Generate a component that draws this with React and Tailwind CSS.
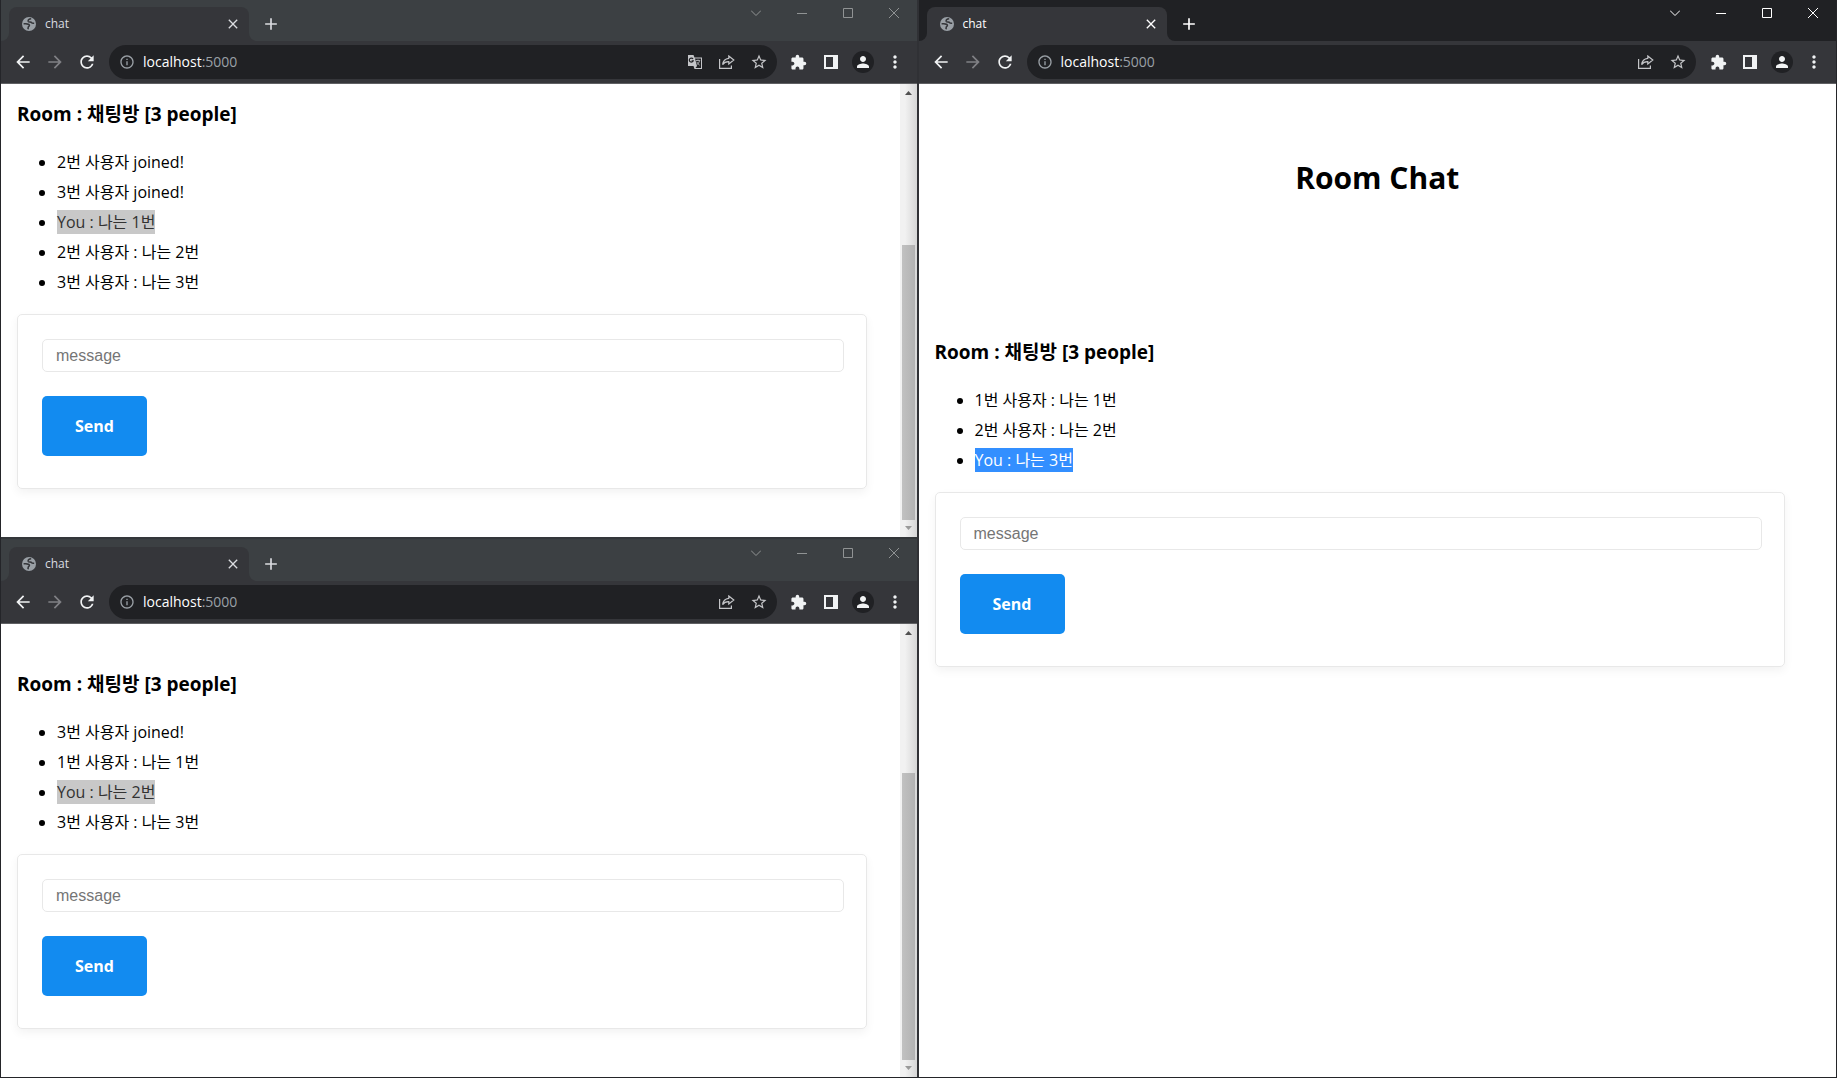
import React from 'react';
import { MdArrowBack, MdArrowForward, MdRefresh, MdInfoOutline, MdExtension, MdStarBorder, MdPerson, MdMoreVert, MdClose, MdAdd } from 'react-icons/md';

function Globe() {
  return (
    <svg viewBox="0 0 14 14" className="size-3.5 shrink-0" aria-hidden="true">
      <circle cx="7" cy="7" r="7" fill="#9aa0a6" />
      <path
        d="M9.200 1.800C6.800 2 5.900 3 6.200 4.200 6.600 5.500 9 4.600 9.600 5.700 10 6.500 11.200 6.300 12.200 6.300M1.600 6.800C3.800 6.700 5.400 6.400 6.400 7.300 7.400 7.600 7.800 8.600 6.800 9.400 5.800 9.900 6.300 11 6 12.200"
        fill="none"
        stroke="#35363a"
        strokeWidth="1.600"
      />
    </svg>
  );
}

function TranslateIcon() {
  return (
    <svg viewBox="0 0 14 14" className="size-3.5" aria-hidden="true">
      <path d="M0 0h5.500l1 2.500H14V14H6.500l-1-3H0z" fill="#c4c5c8" />
      <path d="M7 3.500h6V13H7.500l1.500-2z" fill="#202124" />
      <path d="M7.800 5.500h4.400M10 4.500v1M11.500 5.800c-.4 1.700-1.300 3-2.700 3.900M8.700 6.800c.6 1.300 1.700 2.600 3 3.400" fill="none" stroke="#a4a5a8" />
      <path d="M5 4A2 2 0 1 0 5.200 5.800H3.600" fill="none" stroke="#202124" strokeWidth="1.200" />
    </svg>
  );
}

function ShareIcon() {
  return (
    <svg viewBox="0 0 16 14" className="h-3.5 w-4" fill="none" stroke="#c4c5c8" strokeWidth="1.200" aria-hidden="true">
      <path d="M.6 4v9.400h11.800V10.500" />
      <path d="M9.800 1l5 4-5 4V6.600C7 6.500 5 7.500 3.600 9.600 4 6.300 6 3.700 9.800 3.300z" />
    </svg>
  );
}

function WindowControls({ active }) {
  const color = active ? 'text-white' : 'text-[#909394]';
  const button = 'flex h-[26px] w-[46px] items-center justify-center';
  const svg = { viewBox: '0 0 10 10', className: 'size-2.5', fill: 'none', stroke: 'currentColor', 'aria-hidden': true };
  return (
    <div className={`ml-auto flex ${color}`}>
      <button className={button} aria-label="Search tabs"><svg {...svg}><path d="M0 2.500l5 5 5-5" /></svg></button>
      <button className={button} aria-label="Minimize"><svg {...svg}><path d="M0 5.500h10" /></svg></button>
      <button className={button} aria-label="Maximize"><svg {...svg}><path d="M.5.500h9v9h-9z" /></svg></button>
      <button className={button} aria-label="Close"><svg {...svg}><path d="M0 0l10 10M10 0L0 10" /></svg></button>
    </div>
  );
}

function TabBar({ active, framed }) {
  const bar = active ? 'bg-[#202124]' : 'bg-[#3c4043]';
  const label = active ? 'text-white' : 'text-[#dadce0]';
  return (
    <div className={`flex shrink-0 items-start ${bar} ${framed ? 'h-11 border-t-2 border-[#34373a] pt-px' : 'h-[41px]'}`}>
      <div className="h-[41px] w-2 shrink-0 self-end bg-[#35363a]">
        <div className={`h-full rounded-br-lg ${bar}`} />
      </div>
      <div className="mt-[7px] flex h-[34px] w-60 shrink-0 items-center rounded-t-lg bg-[#35363a] pr-2 pl-[13px]">
        <Globe />
        <span className={`ml-[9px] font-['Open_Sans'] text-xs ${label}`}>chat</span>
        <button aria-label="Close tab" className={`ml-auto ${label}`}><MdClose className="size-4" /></button>
      </div>
      <div className="h-[41px] w-2 shrink-0 self-end bg-[#35363a]">
        <div className={`h-full rounded-bl-lg ${bar}`} />
      </div>
      <button aria-label="New tab" className={`mt-3.5 ml-1 ${label}`}><MdAdd className="size-5" /></button>
      <WindowControls active={active} />
    </div>
  );
}

function Toolbar({ translate }) {
  const cell = 'flex w-8 shrink-0 items-center justify-center';
  return (
    <div className="flex h-[43px] shrink-0 items-center border-b border-[#5f6063] bg-[#35363a] px-1.5 text-[#f1f3f4]">
      <button aria-label="Back" className={cell}><MdArrowBack className="size-5" /></button>
      <button aria-label="Forward" className={`${cell} text-[#808185]`}><MdArrowForward className="size-5" /></button>
      <button aria-label="Reload" className={cell}><MdRefresh className="size-5" /></button>
      <div className="mx-1.5 flex h-[34px] flex-1 items-center rounded-full bg-[#202124] pr-0.5 pl-2.5">
        <MdInfoOutline className="size-4 shrink-0 text-[#9aa0a6]" />
        <a href="#address" className="ml-2 font-['Open_Sans'] text-sm text-white">
          localhost<span className="text-[#9aa0a6]">:5000</span>
        </a>
        <div className="ml-auto flex items-center">
          {translate && <button aria-label="Translate this page" className={cell}><TranslateIcon /></button>}
          <button aria-label="Share" className={cell}><ShareIcon /></button>
          <button aria-label="Bookmark" className={`${cell} text-[#c4c5c8]`}><MdStarBorder className="size-[18px]" /></button>
        </div>
      </div>
      <button aria-label="Extensions" className={cell}><MdExtension className="size-[17px]" /></button>
      <button aria-label="Side panel" className={cell}>
        <svg viewBox="0 0 14 14" className="size-3.5" aria-hidden="true"><path d="M0 0h14v14H0zM2 2v10h7V2z" fill="#f1f3f4" fillRule="evenodd" /></svg>
      </button>
      <button aria-label="Profile" className={cell}>
        <span className="flex size-[22px] items-center justify-center rounded-full bg-[#202124]"><MdPerson className="size-[18px]" /></span>
      </button>
      <button aria-label="Menu" className={cell}><MdMoreVert className="size-5" /></button>
    </div>
  );
}

function Scrollbar({ before, thumb }) {
  return (
    <div className="flex w-[17px] shrink-0 flex-col items-center bg-linear-to-r from-[#f1f1f1] from-30% to-[#d6d6d6]">
      <svg viewBox="0 0 17 17" className="size-[17px] shrink-0" aria-hidden="true"><path d="M5 11h7L8.500 7z" fill="#505050" /></svg>
      <div className="w-[13px]" style={{ flexGrow: before }} />
      <div className="w-[13px] bg-linear-to-r from-[#c1c1c1] to-[#b2b2b2]" style={{ flexGrow: thumb }} />
      <svg viewBox="0 0 17 17" className="size-[17px] shrink-0" aria-hidden="true"><path d="M5 6h7l-3.500 4z" fill="#9a9a9a" /></svg>
    </div>
  );
}

function ChatRoom({ messages, selection }) {
  return (
    <section>
      <h3 className="text-[19px] leading-6 font-bold">Room : 채팅방 [3 people]</h3>
      <ul className="mt-6 list-disc pl-10 text-base leading-6">
        {messages.map((message) => (
          <li key={message} className="mb-1.5">
            <span className={message.startsWith('You') ? `inline-block ${selection}` : 'inline-block'}>{message}</span>
          </li>
        ))}
      </ul>
      <form className="mt-5 max-w-[850px] rounded-[5px] border border-[#e8e8e8] pt-6 pr-[22px] pb-8 pl-6 shadow-[0_4px_10px_rgba(0,0,0,0.05)]">
        <input aria-label="message" placeholder="message" className="block h-[33px] w-full rounded-[5px] border border-[#e8e8e8] px-[13px] font-['Liberation_Sans'] text-base placeholder:text-[#757575]" />
        <button type="button" className="mt-6 block h-[60px] w-[105px] rounded-[5px] bg-[#128bf0] text-base font-bold text-white">Send</button>
      </form>
    </section>
  );
}

function BrowserWindow({ active, framed, translate, scrollbar, pagePadding, children }) {
  return (
    <div className={`flex min-w-0 grow flex-col ${framed ? 'basis-[87px]' : 'basis-[84px]'}`}>
      <TabBar active={active} framed={framed} />
      <Toolbar translate={translate} />
      <div className="flex flex-1 bg-white">
        <main className={`min-w-0 flex-1 px-4 ${pagePadding}`}>{children}</main>
        {scrollbar && <Scrollbar before={scrollbar[0]} thumb={scrollbar[1]} />}
      </div>
    </div>
  );
}

const inactive = 'bg-[#c8c8c8] text-[#323232]';

export default function App() {
  return (
    <div className="grid min-h-screen grid-cols-2 border-r border-b border-l border-[#242529] bg-white font-['Open_Sans','Noto_Sans_CJK_KR',sans-serif] text-black">
      <div className="flex flex-col border-r-2 border-[#303135]">
        <BrowserWindow translate scrollbar={[144, 275]} pagePadding="pt-[18px] pb-8">
          <ChatRoom
            selection={inactive}
            messages={['2번 사용자 joined!', '3번 사용자 joined!', 'You : 나는 1번', '2번 사용자 : 나는 2번', '3번 사용자 : 나는 3번']}
          />
        </BrowserWindow>
        <BrowserWindow framed scrollbar={[132, 287]} pagePadding="pt-12 pb-8">
          <ChatRoom
            selection={inactive}
            messages={['3번 사용자 joined!', '1번 사용자 : 나는 1번', 'You : 나는 2번', '3번 사용자 : 나는 3번']}
          />
        </BrowserWindow>
      </div>
      <BrowserWindow active pagePadding="pt-[70px] pb-8">
        <h1 className="mb-[138px] text-center text-[30px] leading-12 font-bold">Room Chat</h1>
        <ChatRoom
          selection="bg-[#338fff] text-white"
          messages={['1번 사용자 : 나는 1번', '2번 사용자 : 나는 2번', 'You : 나는 3번']}
        />
      </BrowserWindow>
    </div>
  );
}
